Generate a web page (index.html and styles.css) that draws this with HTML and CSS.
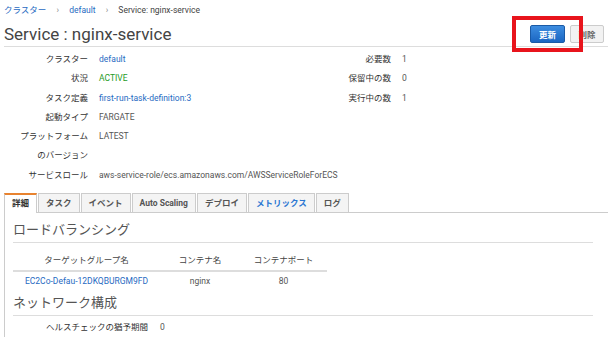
FILE: index.html
```html
<!DOCTYPE html>
<html lang="ja">
<head>
    <meta charset="UTF-8">
    <title>Service : nginx-service</title>
    <link rel="stylesheet" href="styles.css">
</head>
<body>

<div class="breadcrumb">
    <a href="#">クラスター</a>
    <span class="sep">›</span>
    <a href="#">default</a>
    <span class="sep">›</span>
    <span>Service: nginx-service</span>
</div>

<div class="title-row">
    <h1>Service : nginx-service</h1>
    <div class="actions">
        <button class="btn btn-primary">更新</button>
        <button class="btn btn-default">削除</button>
    </div>
</div>
<div class="highlight"></div>

<div class="details">
    <div class="detail-col">
        <div class="label">クラスター</div><div class="value"><a href="#">default</a></div>
        <div class="label">状況</div><div class="value active">ACTIVE</div>
        <div class="label">タスク定義</div><div class="value"><a href="#">first-run-task-definition:3</a></div>
        <div class="label">起動タイプ</div><div class="value">FARGATE</div>
        <div class="label">プラットフォーム</div><div class="value">LATEST</div>
        <div class="label">のバージョン</div><div class="value"></div>
        <div class="label">サービスロール</div><div class="value">aws-service-role/ecs.amazonaws.com/AWSServiceRoleForECS</div>
    </div>
    <div class="detail-col">
        <div class="label">必要数</div><div class="value">1</div>
        <div class="label">保留中の数</div><div class="value">0</div>
        <div class="label">実行中の数</div><div class="value">1</div>
    </div>
</div>

<ul class="tabs">
    <li class="tab selected">詳細</li>
    <li class="tab">タスク</li>
    <li class="tab">イベント</li>
    <li class="tab">Auto Scaling</li>
    <li class="tab">デプロイ</li>
    <li class="tab link">メトリックス</li>
    <li class="tab">ログ</li>
</ul>

<div class="panel">
    <h2>ロードバランシング</h2>
    <table class="lb-table">
        <thead>
            <tr>
                <th class="col-group">ターゲットグループ名</th>
                <th class="col-name">コンテナ名</th>
                <th class="col-port">コンテナポート</th>
            </tr>
        </thead>
        <tbody>
            <tr>
                <td><a href="#">EC2Co-Defau-12DKQBURGM9FD</a></td>
                <td>nginx</td>
                <td>80</td>
            </tr>
        </tbody>
    </table>

    <h2 class="section-gap">ネットワーク構成</h2>
    <div class="net-row">
        <div class="label">ヘルスチェックの猶予期間</div><div class="value">0</div>
    </div>
</div>

</body>
</html>
```

FILE: styles.css
```css
body {
    margin: 0;
    font-family: Roboto, "Noto Sans CJK JP", sans-serif;
    font-size: 8.5px;
    color: #444;
    background: #fff;
    overflow: hidden;
}
a {
    color: #1f6ac2;
    text-decoration: none;
}
.breadcrumb {
    padding: 4px 4px 0;
    height: 12px;
    line-height: 12px;
}
.breadcrumb .sep {
    color: #888;
    margin: 0 8px;
}
.title-row {
    display: flex;
    justify-content: space-between;
    align-items: center;
    margin-left: 4px;
    padding: 6px 4px 0 0;
    height: 24px;
    border-bottom: 1px solid #ddd;
}
h1 {
    margin: 0;
    font-size: 17px;
    font-weight: normal;
    line-height: 24px;
    color: #444;
}
.actions {
    display: flex;
    gap: 5px;
}
.btn {
    height: 18px;
    padding: 0;
    font-family: inherit;
    font-size: 8.5px;
    font-weight: bold;
    border-radius: 2px;
}
.btn-primary {
    width: 35px;
    color: #fff;
    background: linear-gradient(#3d8de0, #1b66c2);
    border: 1px solid #1a5aa6;
}
.btn-default {
    width: 34px;
    color: #666;
    background: #f2f2f2;
    border: 1px solid #ccc;
}
.highlight {
    position: absolute;
    left: 512px;
    top: 16px;
    width: 71px;
    height: 36px;
    box-sizing: border-box;
    border: 4px solid #e8141c;
}
.details {
    display: grid;
    grid-template-columns: 303px 1fr;
    padding: 3px 0 0 4px;
}
.detail-col {
    display: grid;
    grid-template-columns: 84px auto;
    column-gap: 11px;
    align-content: start;
    line-height: 19.3px;
}
.label {
    text-align: right;
    color: #333;
    white-space: nowrap;
}
.value {
    color: #555;
    white-space: nowrap;
}
.value.active {
    color: #1e9a1e;
}
.tabs {
    display: flex;
    gap: 1px;
    list-style: none;
    margin: 8px 0 0;
    padding: 0 0 0 4px;
}
.tab {
    height: 18px;
    line-height: 18px;
    padding: 0 7px;
    background: #f4f4f4;
    border: 1px solid #ccc;
    border-bottom: none;
    color: #555;
    font-weight: bold;
    margin-bottom: -1px;
    position: relative;
}
.tab.selected {
    background: #fff;
    border-top: 2px solid #e8832f;
    line-height: 17px;
    color: #333;
}
.tab.link {
    color: #2a76d2;
}
.panel {
    margin-left: 4px;
    border-top: 1px solid #ccc;
    border-left: 1px solid #ccc;
    padding: 0 15px 20px 8px;
}
h2 {
    margin: 0;
    padding: 8px 0 3px;
    font-size: 13px;
    line-height: 18px;
    font-weight: normal;
    color: #555;
    border-bottom: 1px solid #ddd;
}
h2.section-gap {
    padding-top: 4px;
}
.lb-table {
    border-collapse: collapse;
    margin: 8px 0 0;
    width: 314px;
    text-align: center;
}
.lb-table th {
    font-weight: normal;
    color: #444;
    line-height: 18px;
    padding: 0 0 1px;
    border-bottom: 2px solid #ddd;
}
.lb-table td {
    line-height: 18px;
    padding: 0;
    color: #555;
}
.col-group {
    width: 147px;
}
.col-name {
    width: 80px;
}
.net-row {
    display: grid;
    grid-template-columns: 135px auto;
    column-gap: 12px;
    line-height: 19px;
    padding-top: 2px;
}
```
